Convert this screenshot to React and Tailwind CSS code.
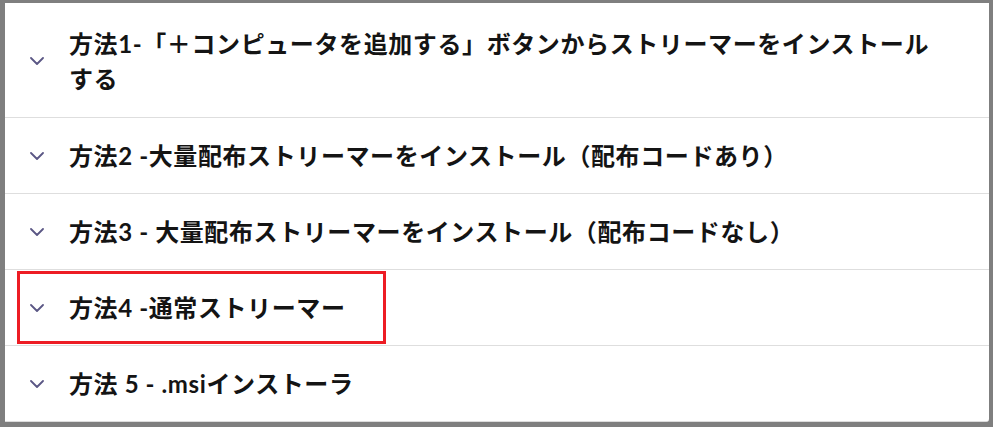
import React from 'react';

const items = [
  '方法1-「＋コンピュータを追加する」ボタンからストリーマーをインストールする',
  '方法2 -大量配布ストリーマーをインストール（配布コードあり）',
  '方法3 - 大量配布ストリーマーをインストール（配布コードなし）',
  '方法4 -通常ストリーマー',
  '方法 5 - .msiインストーラ',
];

const Chevron = () => (
  <svg width="14" height="8" viewBox="0 0 14 8" fill="none" className="shrink-0">
    <path d="M1 1l6 6 6-6" stroke="#5b5785" strokeWidth="1.8" strokeLinecap="round" strokeLinejoin="round" />
  </svg>
);

export default function App() {
  return (
    <div className="w-[993px] h-[427px] bg-[#7f7f7f] pt-[3px] pl-[5px] pr-[4px] pb-[5px]">
      <div
        className="h-full bg-white rounded-br-[3px] border-b border-[#dcdcdc] overflow-hidden"
        style={{ fontFamily: 'Lato, "Noto Sans CJK JP", sans-serif' }}
      >
        {items.map((text, i) => (
          <div
            key={i}
            className={`relative flex items-center border-b border-[#dedede] pl-[25px] pr-[46px] ${
              i === 0 ? 'pt-[23px] pb-[21px]' : 'py-5'
            }`}
          >
            <Chevron />
            <div className="ml-[25px] text-[24px] leading-[35px] font-bold text-[#141414] tracking-[0.6px]">
              {text}
            </div>
            {i === 3 && (
              <div className="absolute left-[12px] top-[1px] w-[369px] h-[73px] border-[3px] border-solid border-[#ed1c24]" />
            )}
          </div>
        ))}
      </div>
    </div>
  );
}
